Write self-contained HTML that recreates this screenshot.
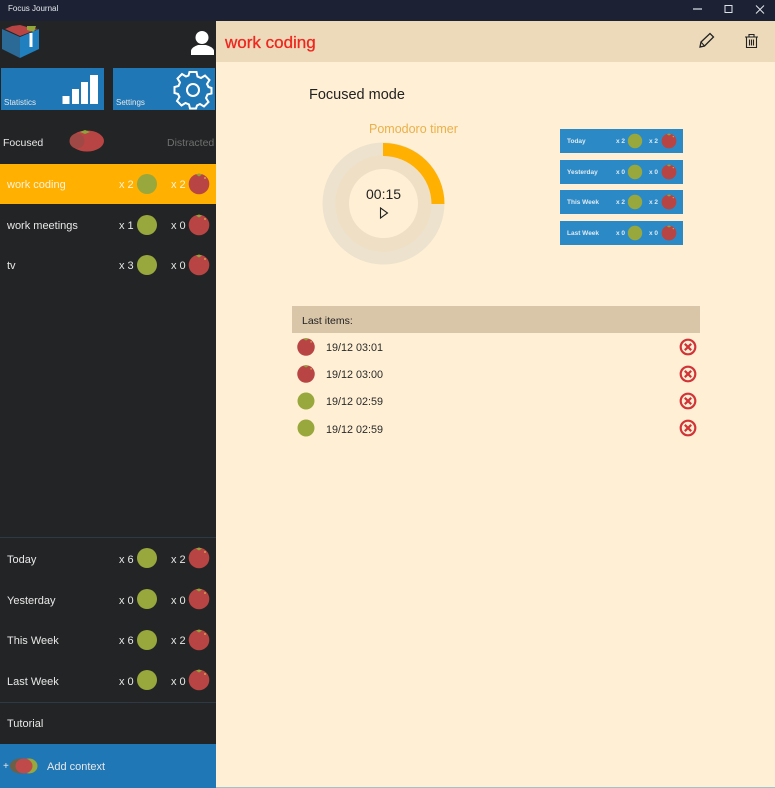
<!DOCTYPE html>
<html><head><meta charset="utf-8">
<style>
html,body{margin:0;padding:0;width:775px;height:788px;overflow:hidden;background:#fff0d5;font-family:"Liberation Sans",sans-serif}
.a{position:absolute;white-space:nowrap;line-height:1}
.t{font-size:11px;color:#e8e8e8}
.m{font-size:6.5px;color:#dfeaf3;font-weight:bold}
.card{position:absolute;left:560px;width:123px;height:24px;background:#2b8ac6}
.row{font-size:10.800px;color:#2a2a2a}
svg{position:absolute;left:0;top:0}
</style></head><body>
<div class="a" style="left:0;top:0;width:775px;height:21px;background:#1c2233"></div>
<div class="a" style="left:0;top:21px;width:216px;height:767px;background:#232425"></div>
<div class="a" style="left:216px;top:21px;width:559px;height:41px;background:#ecdabb"></div>
<div class="a" style="left:0;top:164px;width:216px;height:40px;background:#ffb000"></div>
<div class="a" style="left:1px;top:68px;width:103px;height:42px;background:#1f77b6"></div>
<div class="a" style="left:113px;top:68px;width:102px;height:42px;background:#1f77b6"></div>
<div class="a" style="left:0;top:744px;width:216px;height:44px;background:#1f77b6"></div>
<div class="a" style="left:216px;top:787px;width:559px;height:1px;background:#1f77b6;opacity:.4"></div>
<div class="a" style="left:0;top:537px;width:216px;height:1px;background:#2f3845"></div>
<div class="a" style="left:0;top:702px;width:216px;height:1px;background:#2f3845"></div>
<div class="a" style="left:292px;top:306px;width:408px;height:27px;background:#d9c5a8"></div>

<svg width="775" height="788" viewBox="0 0 775 788">
<defs>
<g id="g"><circle r="10" fill="#98a83c"/></g>
<g id="r"><circle r="10.300" fill="#b94444"/><path d="M-3-9.500 0-10.500 3-9.500 0-7.500Z" fill="#8fa33a"/><circle cx="6" cy="-6" r="1" fill="#d99a50"/></g>
<g id="x"><circle r="7.300" fill="none" stroke="#d13438" stroke-width="2.200"/><path d="M-3.200-3.200 3.200 3.200M3.200-3.200-3.200 3.200" stroke="#d13438" stroke-width="2.200"/></g>
</defs>
<!-- logo -->
<path d="M5 29 12 26 20 25 27 27 38 29 20 36Z" fill="#b84444"/>
<path d="M27 26 36 26 34 32 27 30Z" fill="#93a63b"/>
<path d="M2 29 20 37V58L2 49Z" fill="#2b6a96"/>
<path d="M20 37 39 29V49L20 58Z" fill="#1f7fbf"/>
<path d="M29.500 33h3v14h-3Z" fill="#fff"/>
<!-- user -->
<circle cx="202" cy="37.500" r="6.500" fill="#fff"/>
<path d="M191 55V50.500Q192 47 198 45H206Q213 47 214 50.500V55Z" fill="#fff"/>
<!-- bars -->
<path d="M62.500 96h7v8h-7ZM72 89h7v15h-7ZM81 82h7v22h-7ZM90 75h8v29h-8Z" fill="#fff"/>
<!-- gear -->
<g transform="translate(193,90)" fill="none" stroke="#fff">
<circle r="6" stroke-width="2"/>
<path stroke-width="2" d="M-3.500-18H3.500L4.500-13.500 8-12 12-14.500 16.500-10 14-6 15.500-3 18.500-2V3.500L14.500 4.500 13 8 15.500 12 11 16.500 7 14 4 15.500 3 18.500H-3L-4 14.500-7.500 13-11.500 15.500-16 11-13.500 7-15 4-18.500 3V-3L-14.500-4-13-7.500-15.500-11.500-11-16-7-13.500-4.500-14.500Z"/>
</g>
<!-- big tomato -->
<ellipse cx="87" cy="141" rx="17" ry="10.500" fill="#b94444"/>
<ellipse cx="77" cy="141" rx="7.500" ry="7.500" fill="#a04845"/>
<path d="M80 132 85 130 90 132 85 134Z" fill="#8fa33a"/>
<!-- rows -->
<use href="#g" x="147" y="184"/><use href="#r" x="199" y="184"/>
<use href="#g" x="147" y="225"/><use href="#r" x="199" y="225"/>
<use href="#g" x="147" y="265"/><use href="#r" x="199" y="265"/>
<use href="#g" x="147" y="558"/><use href="#r" x="199" y="558"/>
<use href="#g" x="147" y="599"/><use href="#r" x="199" y="599"/>
<use href="#g" x="147" y="640"/><use href="#r" x="199" y="640"/>
<use href="#g" x="147" y="680"/><use href="#r" x="199" y="680"/>
<!-- add context -->
<ellipse cx="20" cy="766" rx="10" ry="7.500" fill="#6d6048"/>
<ellipse cx="29" cy="766" rx="8.500" ry="7.500" fill="#98a83c"/>
<ellipse cx="24" cy="766" rx="8.500" ry="7.500" fill="#c04a4a"/>
<!-- ring -->
<circle cx="383.500" cy="203.500" r="61" fill="#ece2cd"/>
<circle cx="383.500" cy="203.500" r="48" fill="#efdfc4"/>
<circle cx="383.500" cy="203.500" r="34.500" fill="#fff0d5"/>
<path d="M383 143A61 61 0 0 1 444.500 204H431.500A48 48 0 0 0 383 156Z" fill="#ffb000"/>
<path d="M380.500 208 387.500 213 380.500 218Z" fill="none" stroke="#222" stroke-width="1.100"/>
<!-- header icons -->
<path d="M700 47 701 42 710 33.500 713.500 37 704.500 46Z" fill="none" stroke="#222" stroke-width="1.300"/>
<path d="M701 42 704.500 46" stroke="#222" stroke-width="1"/>
<path d="M746.500 37H756.500V47.500H746.500ZM745 37H758M749 37V34.500H754V37M749.500 39.500V45.500M751.500 39.500V45.500M753.500 39.500V45.500" fill="none" stroke="#222" stroke-width="1.100"/>
<!-- window -->
<path d="M693 9H702" stroke="#dfe3ea" stroke-width="1.200"/>
<rect x="725" y="5.500" width="7" height="7" fill="none" stroke="#dfe3ea" stroke-width="1"/>
<path d="M756 5.500 764 13.500M764 5.500 756 13.500" stroke="#dfe3ea" stroke-width="1"/>
<!-- last items -->
<use href="#r" transform="translate(306,347) scale(.85)"/>
<use href="#r" transform="translate(306,374) scale(.85)"/>
<use href="#g" transform="translate(306,401) scale(.85)"/>
<use href="#g" transform="translate(306,428) scale(.85)"/>
<use href="#x" x="688" y="347"/><use href="#x" x="688" y="374"/><use href="#x" x="688" y="401"/><use href="#x" x="688" y="428"/>
</svg>

<div class="a" style="left:8px;top:5px;font-size:8px;color:#e6e8ee">Focus Journal</div>
<div class="a t" style="left:4px;top:99px;font-size:8px">Statistics</div>
<div class="a t" style="left:116px;top:99px;font-size:8px">Settings</div>
<div class="a t" style="left:3px;top:138px;font-size:10.500px">Focused</div>
<div class="a t" style="left:167px;top:138px;font-size:10.500px;color:#6f6f6f">Distracted</div>

<div class="a t" style="left:7px;top:180px;color:#fff3d8">work coding</div>
<div class="a t" style="left:119px;top:180px;color:#fff3d8">x 2</div><div class="a t" style="left:171px;top:180px;color:#fff3d8">x 2</div>
<div class="a t" style="left:7px;top:221px">work meetings</div>
<div class="a t" style="left:119px;top:221px">x 1</div><div class="a t" style="left:171px;top:221px">x 0</div>
<div class="a t" style="left:7px;top:261px">tv</div>
<div class="a t" style="left:119px;top:261px">x 3</div><div class="a t" style="left:171px;top:261px">x 0</div>

<div class="a t" style="left:7px;top:555px">Today</div>
<div class="a t" style="left:119px;top:555px">x 6</div><div class="a t" style="left:171px;top:555px">x 2</div>
<div class="a t" style="left:7px;top:596px">Yesterday</div>
<div class="a t" style="left:119px;top:596px">x 0</div><div class="a t" style="left:171px;top:596px">x 0</div>
<div class="a t" style="left:7px;top:636px">This Week</div>
<div class="a t" style="left:119px;top:636px">x 6</div><div class="a t" style="left:171px;top:636px">x 2</div>
<div class="a t" style="left:7px;top:677px">Last Week</div>
<div class="a t" style="left:119px;top:677px">x 0</div><div class="a t" style="left:171px;top:677px">x 0</div>

<div class="a t" style="left:7px;top:719px">Tutorial</div>
<div class="a t" style="left:3px;top:762px;font-size:10px">+</div>
<div class="a t" style="left:47px;top:762px">Add context</div>

<div class="a" style="left:225px;top:34px;font-size:17px;color:#f0261e;-webkit-text-stroke:.3px #f0261e">work coding</div>
<div class="a" style="left:309px;top:88px;font-size:14.500px;color:#222">Focused mode</div>
<div class="a" style="left:369px;top:123px;font-size:12.500px;color:#eab04a">Pomodoro timer</div>
<div class="a" style="left:366px;top:187px;font-size:14px;color:#222">00:15</div>

<div class="card" style="top:129px"></div><div class="card" style="top:160px"></div><div class="card" style="top:190px"></div><div class="card" style="top:221px"></div>
<div class="a m" style="left:567px;top:139px">Today</div><div class="a m" style="left:616px;top:139px">x 2</div><div class="a m" style="left:649px;top:139px">x 2</div>
<div class="a m" style="left:567px;top:170px">Yesterday</div><div class="a m" style="left:616px;top:170px">x 0</div><div class="a m" style="left:649px;top:170px">x 0</div>
<div class="a m" style="left:567px;top:200px">This Week</div><div class="a m" style="left:616px;top:200px">x 2</div><div class="a m" style="left:649px;top:200px">x 2</div>
<div class="a m" style="left:567px;top:231px">Last Week</div><div class="a m" style="left:616px;top:231px">x 0</div><div class="a m" style="left:649px;top:231px">x 0</div>
<svg width="775" height="788" viewBox="0 0 775 788">
<use href="#g" transform="translate(635,141) scale(.72)"/><use href="#r" transform="translate(669,141) scale(.72)"/>
<use href="#g" transform="translate(635,172) scale(.72)"/><use href="#r" transform="translate(669,172) scale(.72)"/>
<use href="#g" transform="translate(635,202) scale(.72)"/><use href="#r" transform="translate(669,202) scale(.72)"/>
<use href="#g" transform="translate(635,233) scale(.72)"/><use href="#r" transform="translate(669,233) scale(.72)"/>
</svg>

<div class="a" style="left:302px;top:316px;font-size:10.500px;color:#222">Last items:</div>
<div class="a row" style="left:326px;top:343px">19/12 03:01</div>
<div class="a row" style="left:326px;top:370px">19/12 03:00</div>
<div class="a row" style="left:326px;top:397px">19/12 02:59</div>
<div class="a row" style="left:326px;top:425px">19/12 02:59</div>
</body></html>
